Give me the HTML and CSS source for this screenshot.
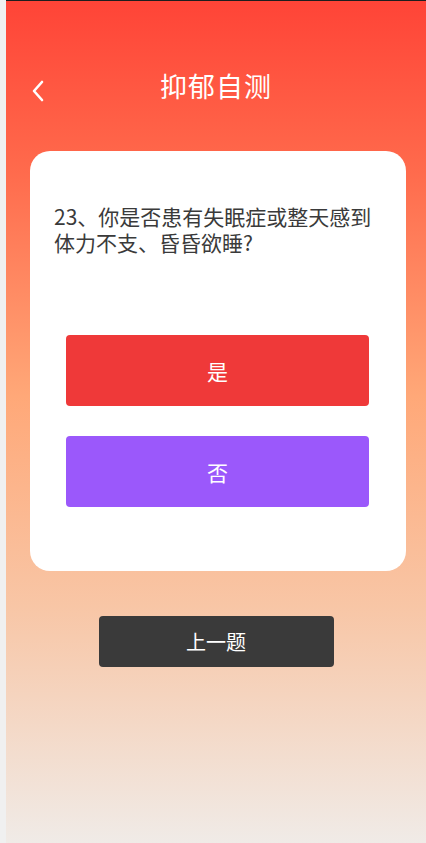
FILE: index.html
```html
<!DOCTYPE html>
<html lang="zh">
<head>
  <meta charset="UTF-8" />
  <meta name="viewport" content="width=device-width, initial-scale=1.0" />
  <title>抑郁自测</title>
  <link rel="stylesheet" href="styles.css">
</head>
<body>
  <div class="app">
    <!-- 顶部标题 -->
    <div class="header">
      <span class="back">
        <svg width="14" height="22" viewBox="0 0 14 22">
          <polyline points="11,2 3,11 11,20" fill="none" stroke="#fff" stroke-width="2.6" stroke-linecap="round" stroke-linejoin="round" />
        </svg>
      </span>
      <h1>抑郁自测</h1>
    </div>

    <!-- 题目卡片 -->
    <div class="card">
      <p class="question">23、你是否患有失眠症或整天感到体力不支、昏昏欲睡?</p>
      <div class="options">
        <button class="btn yes">是</button>
        <button class="btn no">否</button>
      </div>
    </div>

    <button class="prev">上一题</button>
  </div>
</body>
</html>
```

FILE: styles.css
```css
* {
  box-sizing: border-box;
}

body {
  margin: 0;
  background-color: #f0f0f0;
  font-family: "Noto Sans CJK SC", "Noto Sans", sans-serif;
}

.app {
  margin-left: 6px;
  width: 420px;
  height: 843px;
  border-top: 1px solid #1e1e1e;
  background: linear-gradient(180deg, #ff4437 0%, #ff6a4c 20%, #ffa878 47%, #f8c6a6 72%, #f0ebe7 100%);
  display: flex;
  flex-direction: column;
  align-items: center;
}

.header {
  position: relative;
  width: 100%;
  height: 150px;
  padding-top: 67px;
  text-align: center;
}

.back {
  position: absolute;
  left: 25px;
  top: 79px;
}

.header h1 {
  margin: 0;
  font-size: 27px;
  font-weight: normal;
  line-height: 36px;
  color: #fff;
  letter-spacing: 1px;
}

.card {
  width: 376px;
  margin-left: 4px;
  background-color: #fff;
  border-radius: 20px;
  padding: 52px 24px 64px;
}

.question {
  margin: 0;
  font-size: 21px;
  line-height: 26px;
  color: #3a3a3a;
}

.options {
  display: flex;
  flex-direction: column;
  gap: 30px;
  padding: 0 13px 0 12px;
  margin-top: 80px;
}

.btn {
  height: 71px;
  border: none;
  border-radius: 4px;
  color: #fff;
  font-family: inherit;
  font-size: 21px;
  cursor: pointer;
}

.yes {
  background-color: #ef3939;
}

.no {
  background-color: #9b58fb;
}

.prev {
  margin-top: 45px;
  width: 235px;
  height: 51px;
  border: none;
  border-radius: 4px;
  background-color: #3a3a3a;
  color: #fff;
  font-family: inherit;
  font-size: 20px;
  cursor: pointer;
}
```
